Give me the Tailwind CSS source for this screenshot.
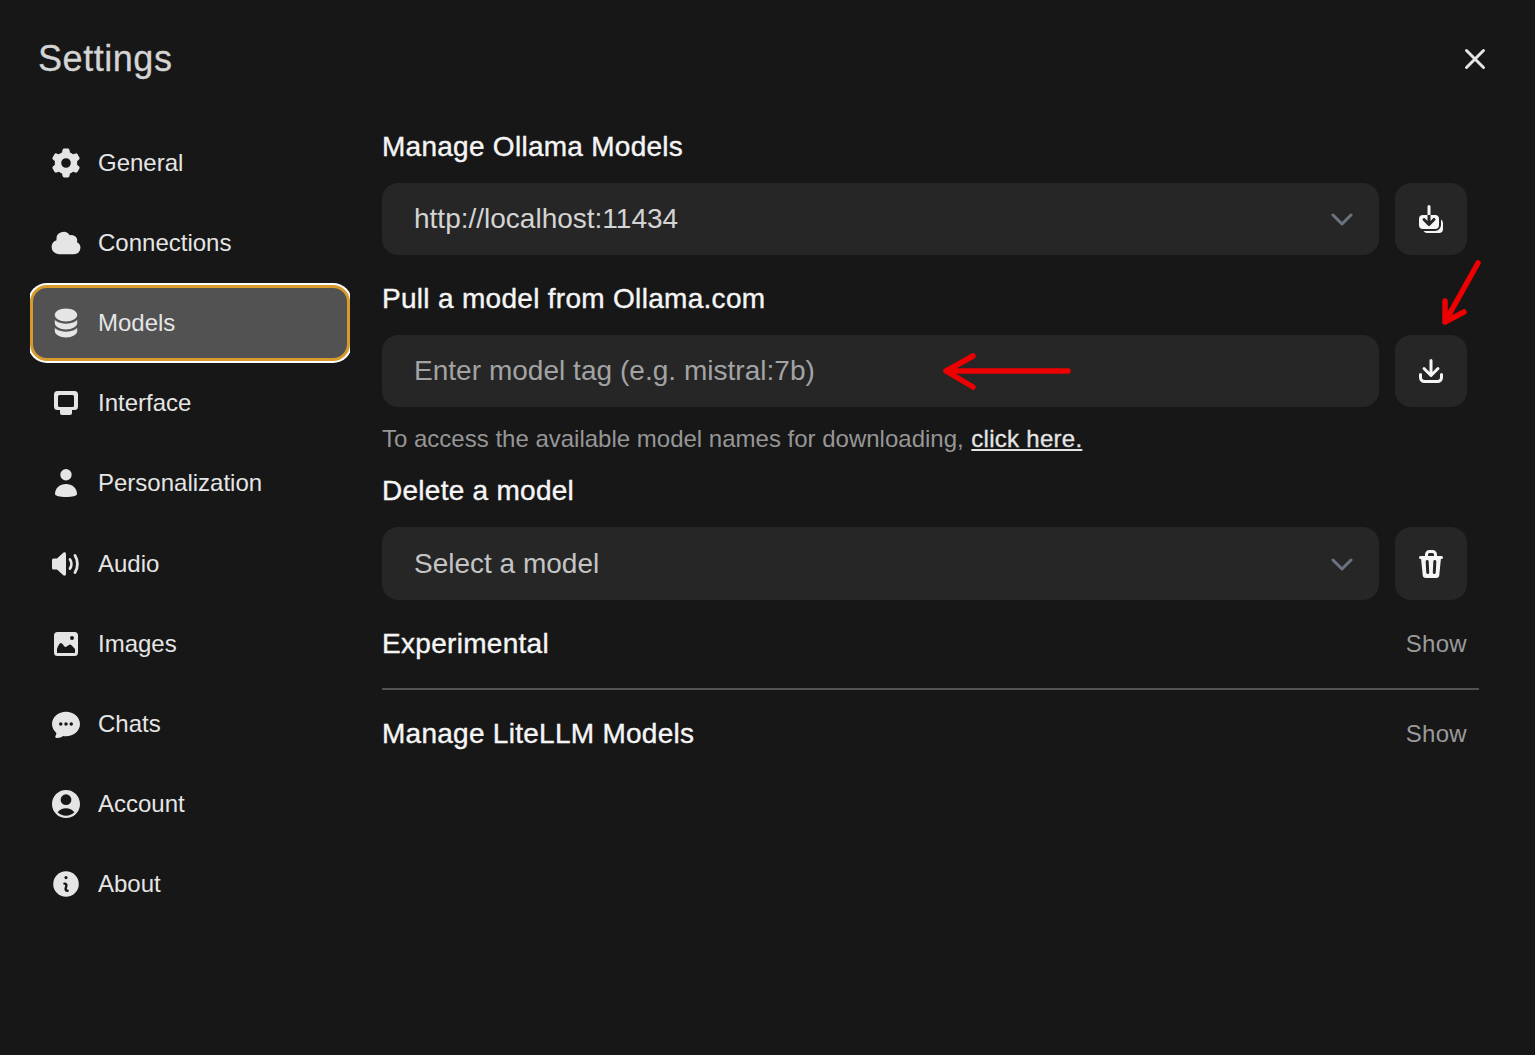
<!DOCTYPE html>
<html>
<head>
<meta charset="utf-8">
<script src="https://cdn.jsdelivr.net/npm/@tailwindcss/browser@4"></script>
</head>
<body class="bg-[#171717] font-['Liberation_Sans',Arial,sans-serif] text-[#e5e5e5]">
<div class="relative w-[1535px] h-[1055px] overflow-hidden">
  <div class="flex items-center justify-between pl-[38px] pr-[48px] pt-[36px] h-[82px]">
    <div class="text-[36px] leading-[46px] tracking-[0.55px] [-webkit-text-stroke:0.3px] text-[#d4d4d4]">Settings</div>
    <svg class="w-[24px] h-[24px]" viewBox="0 0 24 24" fill="none" stroke="#e5e5e5" stroke-width="3" stroke-linecap="round"><path d="M3.5 3.5l17 17M20.5 3.5l-17 17"/></svg>
  </div>
  <div class="flex pl-[30px] pt-[41px]">
    <nav class="w-[320px] shrink-0 flex flex-col text-[24px]">
      <div class="h-[80.1px] flex items-center pl-[20px] gap-[16px]"><svg class="w-[32px] h-[32px]" viewBox="0 0 20 20" fill="#e5e5e5"><path fill-rule="evenodd" d="M7.84 1.804A1 1 0 018.82 1h2.36a1 1 0 01.98.804l.331 1.652a6.993 6.993 0 011.929 1.115l1.598-.54a1 1 0 011.186.447l1.18 2.044a1 1 0 01-.205 1.251l-1.267 1.113a7.047 7.047 0 010 2.228l1.267 1.113a1 1 0 01.206 1.25l-1.18 2.045a1 1 0 01-1.187.447l-1.598-.54a6.993 6.993 0 01-1.929 1.115l-.33 1.652a1 1 0 01-.98.804H8.82a1 1 0 01-.98-.804l-.331-1.652a6.993 6.993 0 01-1.929-1.115l-1.598.54a1 1 0 01-1.186-.447l-1.18-2.044a1 1 0 01.205-1.251l1.267-1.114a7.05 7.05 0 010-2.227L1.821 7.773a1 1 0 01-.206-1.25l1.18-2.045a1 1 0 011.187-.447l1.598.54A6.993 6.993 0 017.51 3.456l.33-1.652zM10 13a3 3 0 100-6 3 3 0 000 6z"/></svg><span>General</span></div>
      <div class="h-[80.1px] flex items-center pl-[20px] gap-[16px]"><svg class="w-[32px] h-[32px]" viewBox="0 0 20 20" fill="#e5e5e5"><path d="M1 12.5A4.5 4.5 0 005.5 17H15a4 4 0 001.866-7.539 3.504 3.504 0 00-4.504-4.272A4.5 4.5 0 004.06 8.235 4.502 4.502 0 001 12.5z"/></svg><span>Connections</span></div>
      <div class="h-[80.1px] flex items-center overflow-x-clip"><div class="w-full h-[76px] flex items-center pl-[17px] gap-[16px] bg-[#525252] rounded-[17px] border-[3px] border-[#d69a2d] shadow-[0_0_0_2px_#fff]"><svg class="w-[32px] h-[32px]" viewBox="0 0 20 20" fill="#e5e5e5"><path d="M10 1c3.866 0 7 1.79 7 4s-3.134 4-7 4-7-1.79-7-4 3.134-4 7-4zm5.694 8.13c.464-.264.91-.583 1.306-.952V10c0 2.21-3.134 4-7 4s-7-1.79-7-4V8.178c.396.37.842.688 1.306.953C5.838 10.006 7.854 10.5 10 10.5s4.162-.494 5.694-1.37zM3 13.179V15c0 2.21 3.134 4 7 4s7-1.79 7-4v-1.822c-.396.37-.842.688-1.306.953-1.532.875-3.548 1.369-5.694 1.369s-4.162-.494-5.694-1.37A7.009 7.009 0 013 13.179z"/></svg><span>Models</span></div></div>
      <div class="h-[80.1px] flex items-center pl-[20px] gap-[16px]"><svg class="w-[32px] h-[32px]" viewBox="0 0 32 32" fill="#e5e5e5"><path fill-rule="evenodd" d="M7.5 4h17A3.5 3.5 0 0 1 28 7.5v12a3.5 3.5 0 0 1-3.5 3.5H7.5A3.5 3.5 0 0 1 4 19.5v-12A3.5 3.5 0 0 1 7.5 4Zm2 4A1.5 1.5 0 0 0 8 9.5v9A1.5 1.5 0 0 0 9.5 20h13a1.5 1.5 0 0 0 1.5-1.5v-9A1.5 1.5 0 0 0 22.5 8Z"/><path d="M10 23h12v3a2 2 0 0 1-2 2h-8a2 2 0 0 1-2-2Z"/></svg><span>Interface</span></div>
      <div class="h-[80.1px] flex items-center pl-[20px] gap-[16px]"><svg class="w-[32px] h-[32px]" viewBox="0 0 32 32" fill="#e5e5e5"><path d="M16 2a5.7 5.7 0 1 0 0 11.4A5.7 5.7 0 0 0 16 2Z"/><path d="M5 27c0-6 5-10 11-10s11 4 11 10c0 2-5 3-11 3s-11-1-11-3Z"/></svg><span>Personalization</span></div>
      <div class="h-[80.1px] flex items-center pl-[20px] gap-[16px]"><svg class="w-[32px] h-[32px]" viewBox="0 0 32 32" fill="#e5e5e5"><path d="M16 6c0-1.5-1.6-2.2-2.7-1.2L7 10.5H3.5A1.5 1.5 0 0 0 2 12v8a1.5 1.5 0 0 0 1.5 1.5H7l6.3 5.7c1.1 1 2.7.3 2.7-1.2Z"/><path fill="none" stroke="#e5e5e5" stroke-width="2.8" stroke-linecap="round" d="M20 11.5c1.8 2.500 1.800 6.500 0 9M25 7.500c3.200 5 3.200 12 0 17"/></svg><span>Audio</span></div>
      <div class="h-[80.1px] flex items-center pl-[20px] gap-[16px]"><svg class="w-[32px] h-[32px]" viewBox="0 0 32 32" fill="#e5e5e5"><path fill-rule="evenodd" d="M7.5 4h17A3.5 3.5 0 0 1 28 7.5v17a3.5 3.5 0 0 1-3.5 3.5h-17A3.5 3.5 0 0 1 4 24.5v-17A3.5 3.5 0 0 1 7.5 4ZM22 8a2 2 0 1 0 0 4 2 2 0 0 0 0-4ZM7 25v-4c1-3 2.500-6 4-6s3 4 4.500 4 3-2.500 4.500-2.500 3.500 3 5 4.500v4Z"/></svg><span>Images</span></div>
      <div class="h-[80.1px] flex items-center pl-[20px] gap-[16px]"><svg class="w-[32px] h-[32px]" viewBox="0.85 0.85 18.3 18.3" fill="#e5e5e5"><path fill-rule="evenodd" d="M10 3c-4.31 0-8 3.033-8 7 0 2.024.978 3.825 2.499 5.085a3.478 3.478 0 01-.522 1.756.75.75 0 00.584 1.143 5.976 5.976 0 003.936-1.108c.487.082.99.124 1.503.124 4.31 0 8-3.033 8-7s-3.69-7-8-7zm0 8a1 1 0 100-2 1 1 0 000 2zm-2-1a1 1 0 11-2 0 1 1 0 012 0zm5 1a1 1 0 100-2 1 1 0 000 2z"/></svg><span>Chats</span></div>
      <div class="h-[80.1px] flex items-center pl-[20px] gap-[16px]"><svg class="w-[32px] h-[32px]" viewBox="0.85 0.85 22.3 22.3" fill="#e5e5e5"><path fill-rule="evenodd" d="M18.685 19.097A9.723 9.723 0 0021.75 12c0-5.385-4.365-9.75-9.75-9.75S2.25 6.615 2.25 12a9.723 9.723 0 003.065 7.097A9.716 9.716 0 0012 21.75a9.716 9.716 0 006.685-2.653zm-12.54-1.285A7.486 7.486 0 0112 15a7.486 7.486 0 015.855 2.812A8.224 8.224 0 0112 20.25a8.224 8.224 0 01-5.855-2.438zM15.75 9a3.75 3.75 0 11-7.5 0 3.75 3.75 0 017.5 0z"/></svg><span>Account</span></div>
      <div class="h-[80.1px] flex items-center pl-[20px] gap-[16px]"><svg class="w-[32px] h-[32px]" viewBox="0 0 20 20" fill="#e5e5e5"><path fill-rule="evenodd" d="M18 10a8 8 0 11-16 0 8 8 0 0116 0zm-7-4a1 1 0 11-2 0 1 1 0 012 0zM9 9a.75.75 0 000 1.5h.253a.25.25 0 01.244.304l-.459 2.066A1.75 1.75 0 0010.747 15H11a.75.75 0 000-1.5h-.253a.25.25 0 01-.244-.304l.459-2.066A1.75 1.75 0 009.253 9H9z"/></svg><span>About</span></div>
    </nav>
    <main class="ml-[32px] w-[1097px]">
      <h2 class="h-[48px] text-[28px] leading-[48px] tracking-[0.27px] [-webkit-text-stroke:0.4px] text-[#f5f5f5]">Manage Ollama Models</h2>
      <div class="mt-[12px] flex gap-[16px] w-[1085px]">
        <div class="flex-1 h-[72px] rounded-[16px] bg-[#262626] flex items-center justify-between pl-[32px] pr-[26px] text-[28px] text-[#d4d4d4]"><span>http://localhost:11434</span><svg class="w-[22px] h-[14px]" viewBox="0 0 22 14" fill="none" stroke="#6b7280" stroke-width="3" stroke-linecap="round" stroke-linejoin="round"><path d="M2 3l9 9 9-9"/></svg></div>
        <div class="w-[72px] h-[72px] rounded-[16px] bg-[#262626] flex items-center justify-center"><svg class="w-[32px] h-[32px]" viewBox="0 0 16 16" fill="#f5f5f5"><path d="M7 1a.75.75 0 0 1 .75.75V6h-1.5V1.75A.75.75 0 0 1 7 1ZM6.25 6v2.94L5.03 7.72a.75.75 0 0 0-1.06 1.06l2.5 2.5a.75.75 0 0 0 1.06 0l2.5-2.5a.75.75 0 1 0-1.06-1.06L7.75 8.94V6H10a2 2 0 0 1 2 2v3a2 2 0 0 1-2 2H4a2 2 0 0 1-2-2V8a2 2 0 0 1 2-2h2.25Z"/><path d="M4.268 14A2 2 0 0 0 6 15h6a2 2 0 0 0 2-2v-3a2 2 0 0 0-1-1.732V11a3 3 0 0 1-3 3H4.268Z"/></svg></div>
      </div>
      <h2 class="mt-[20px] h-[48px] text-[28px] leading-[48px] tracking-[0.3px] [-webkit-text-stroke:0.4px] text-[#f5f5f5]">Pull a model from Ollama.com</h2>
      <div class="mt-[12px] flex gap-[16px] w-[1085px]">
        <div class="flex-1 h-[72px] rounded-[16px] bg-[#262626] flex items-center pl-[32px] text-[28px] tracking-[0.03px] text-[#a3a3a3]"><span>Enter model tag (e.g. mistral:7b)</span></div>
        <div class="w-[72px] h-[72px] rounded-[16px] bg-[#262626] flex items-center justify-center"><svg class="w-[32px] h-[32px]" viewBox="0 0 16 16" fill="#f5f5f5"><path d="M8.75 2.75a.75.75 0 0 0-1.5 0v5.69L5.03 6.22a.75.75 0 0 0-1.06 1.06l3.5 3.5a.75.75 0 0 0 1.06 0l3.5-3.5a.75.75 0 0 0-1.06-1.06L8.75 8.44V2.75Z"/><path d="M3.5 9.75a.75.75 0 0 0-1.5 0v1.5A2.75 2.75 0 0 0 4.75 14h6.5A2.75 2.75 0 0 0 14 11.25v-1.5a.75.75 0 0 0-1.5 0v1.5c0 .69-.56 1.25-1.25 1.25h-6.5c-.69 0-1.25-.56-1.25-1.25v-1.5Z"/></svg></div>
      </div>
      <p class="mt-[16px] h-[32px] text-[24px] leading-[32px] text-[#969696]">To access the available model names for downloading, <a class="ml-[1px] text-[#e5e5e5] underline tracking-[0.27px] [-webkit-text-stroke:0.3px]">click here.</a></p>
      <h2 class="mt-[12px] h-[48px] text-[28px] leading-[48px] tracking-[0.27px] [-webkit-text-stroke:0.4px] text-[#f5f5f5]">Delete a model</h2>
      <div class="mt-[12px] flex gap-[16px] w-[1085px]">
        <div class="flex-1 h-[73px] rounded-[16px] bg-[#262626] flex items-center justify-between pl-[32px] pr-[26px] text-[28px] text-[#c4c4c4]"><span>Select a model</span><svg class="w-[22px] h-[14px]" viewBox="0 0 22 14" fill="none" stroke="#6b7280" stroke-width="3" stroke-linecap="round" stroke-linejoin="round"><path d="M2 3l9 9 9-9"/></svg></div>
        <div class="w-[72px] h-[73px] rounded-[16px] bg-[#262626] flex items-center justify-center"><svg class="w-[32px] h-[32px]" viewBox="0 0 16 16" fill="#f5f5f5"><path fill-rule="evenodd" d="M5 3.25V4H2.75a.75.75 0 0 0 0 1.5h.3l.815 8.15A1.5 1.5 0 0 0 5.357 15h5.285a1.5 1.5 0 0 0 1.493-1.35l.815-8.15h.3a.75.75 0 0 0 0-1.5H11v-.75A2.25 2.25 0 0 0 8.75 1h-1.5A2.25 2.25 0 0 0 5 3.25Zm2.25-.75a.75.75 0 0 0-.75.75V4h3v-.75a.75.75 0 0 0-.75-.75h-1.5ZM6.05 6a.75.75 0 0 1 .787.713l.275 5.5a.75.75 0 0 1-1.498.075l-.275-5.5A.75.75 0 0 1 6.05 6Zm3.9 0a.75.75 0 0 1 .712.787l-.275 5.5a.75.75 0 0 1-1.498-.075l.275-5.5a.75.75 0 0 1 .786-.711Z"/></svg></div>
      </div>
      <div class="mt-[20px] flex items-center justify-between w-[1085px] h-[48px]"><h2 class="text-[28px] tracking-[0.3px] [-webkit-text-stroke:0.4px] text-[#f5f5f5]">Experimental</h2><span class="text-[24px] tracking-[0.3px] text-[#9a9a9a]">Show</span></div>
      <div class="mt-[20px] h-[2px] w-[1097px] bg-[#525252]"></div>
      <div class="mt-[20px] flex items-center justify-between w-[1085px] h-[48px]"><h2 class="text-[28px] tracking-[0.27px] [-webkit-text-stroke:0.4px] text-[#f5f5f5]">Manage LiteLLM Models</h2><span class="text-[24px] tracking-[0.3px] text-[#9a9a9a]">Show</span></div>
    </main>
  </div>
  <svg class="absolute left-[930px] top-[250px] w-[560px] h-[150px] pointer-events-none" viewBox="0 0 560 150" fill="none" stroke="#ec0000" stroke-width="5.500" stroke-linecap="round" stroke-linejoin="round"><path d="M138 121H16M43 106L16 121L43 137"/><path d="M548 13L515 72M515 51L515 72L534 62"/></svg>
</div>
</body>
</html>
